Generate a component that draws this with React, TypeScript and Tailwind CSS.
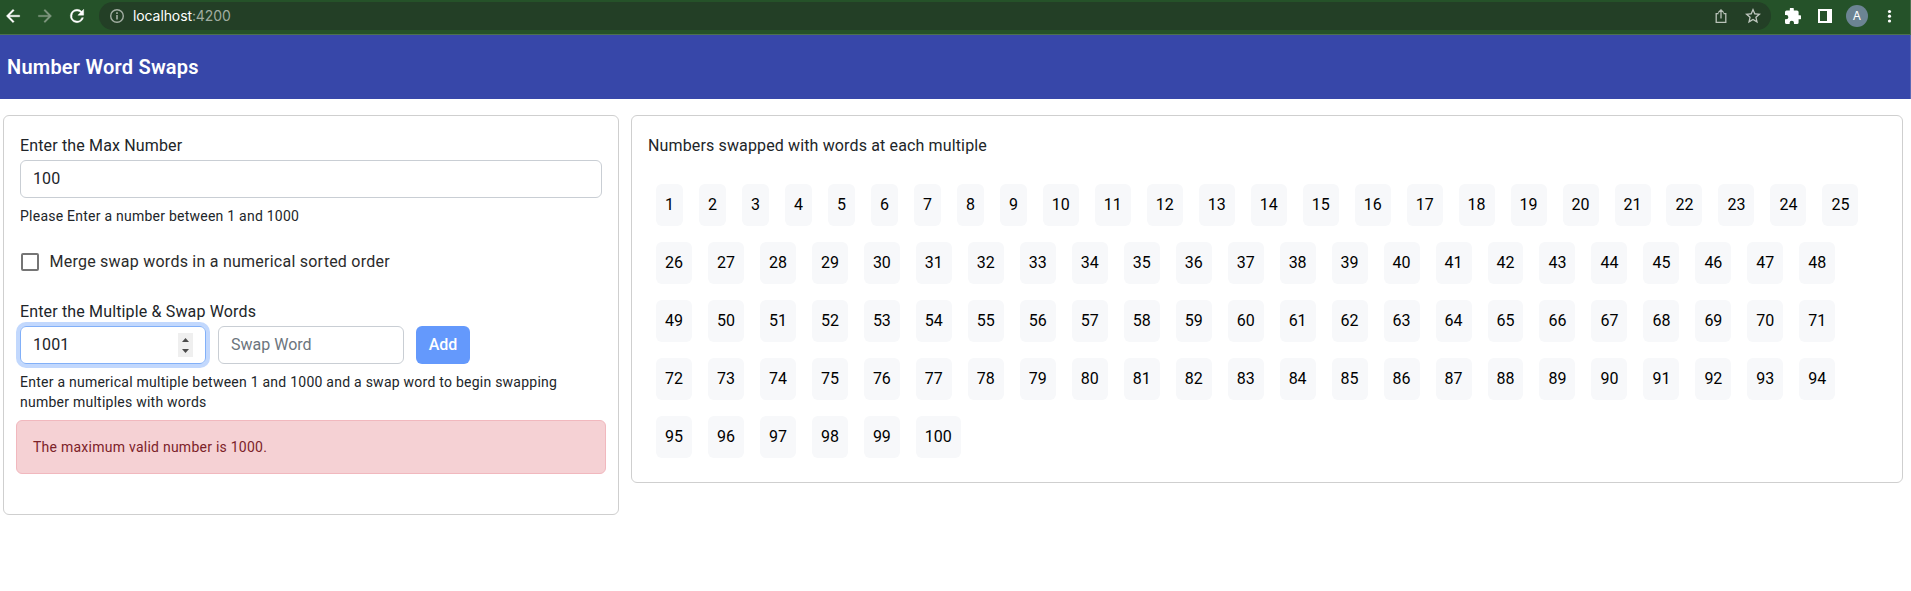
import React from "react";

const numbers = Array.from({ length: 100 }, (_, i) => i + 1);

function BrowserBar() {
  return (
    <div className="flex h-[35px] items-start border-r border-b border-[#4d714f] bg-[#255229] pt-0.5 font-[Inter,sans-serif] text-white">
      <svg className="mt-[4px] ml-[3px] size-5" viewBox="0 0 24 24" fill="currentColor" stroke="currentColor" strokeWidth="0.4">
        <path d="M20 11H7.83l5.59-5.59L12 4l-8 8 8 8 1.41-1.41L7.83 13H20v-2z" />
      </svg>
      <svg className="mt-[4px] ml-3 size-5 text-[#7f977f]" viewBox="0 0 24 24" fill="currentColor" stroke="currentColor" strokeWidth="0.3">
        <path d="M12 4l-1.41 1.41L16.17 11H4v2h12.17l-5.58 5.59L12 20l8-8z" />
      </svg>
      <svg className="mt-[4px] ml-3 size-5" viewBox="0 0 24 24" fill="currentColor" stroke="currentColor" strokeWidth="0.5">
        <path d="M17.65 6.35A7.96 7.96 0 0 0 12 4a8 8 0 1 0 7.73 10h-2.08A6 6 0 1 1 12 6c1.66 0 3.14.69 4.22 1.78L13 11h7V4l-2.35 2.35z" />
      </svg>
      <div className="ml-3 flex h-7 w-[1672px] items-center rounded-full bg-[#233f26] pl-[10px] pr-[10px]">
        <svg className="size-4 text-[#a3aea3]" viewBox="0 0 16 16" fill="none" stroke="currentColor" strokeWidth="1.4">
          <circle cx="8" cy="8" r="6.3" />
          <path d="M8 7v4.4M8 4.3v1.6" strokeWidth="1.6" />
        </svg>
        <span className="ml-2 text-[14px] leading-7 tracking-[-0.1px]">
          localhost<span className="text-[#a0ada0]">:4200</span>
        </span>
        <svg className="ml-auto size-4 text-[#b9c2b9]" viewBox="0 0 16 16" fill="none" stroke="currentColor" strokeWidth="1.3">
          <path d="M5.5 5.6H3.2v8.7h9.6V5.6h-2.3M8 10.5V2M5.2 4.6 8 1.8l2.8 2.8" />
        </svg>
        <svg className="ml-4 size-4 text-[#c0c8c0]" viewBox="2 2 20 20" fill="currentColor">
          <path d="M22 9.24l-7.19-.62L12 2 9.19 8.63 2 9.24l5.46 4.73L5.82 21 12 17.27 18.18 21l-1.63-7.03L22 9.24zM12 15.4l-3.76 2.27 1-4.28-3.32-2.88 4.38-.38L12 6.1l1.71 4.04 4.38.38-3.32 2.88 1 4.28L12 15.4z" />
        </svg>
      </div>
      <svg className="mt-[6px] ml-[14px] size-4" viewBox="2 2 20 20" fill="currentColor">
        <path d="M20.5 11H19V7a2 2 0 0 0-2-2h-4V3.5a2.5 2.5 0 0 0-5 0V5H4a2 2 0 0 0-2 2v3.8h1.5a2.7 2.7 0 0 1 0 5.4H2V20a2 2 0 0 0 2 2h3.8v-1.5a2.7 2.7 0 0 1 5.4 0V22H17a2 2 0 0 0 2-2v-4h1.5a2.5 2.5 0 0 0 0-5z" />
      </svg>
      <svg className="mt-[7px] ml-[17px] size-[14px]" viewBox="0 0 14 14" fill="currentColor" fillRule="evenodd">
        <path d="M0 0h14v14H0zM2 2v10h7V2z" />
      </svg>
      <span className="mt-[3px] ml-[14px] flex size-[22px] items-center justify-center rounded-full bg-[#6c8493] text-[12px]">A</span>
      <svg className="mt-[6px] ml-[13px] size-4" viewBox="0 0 16 16" fill="currentColor">
        <circle cx="8.5" cy="3.5" r="1.6" />
        <circle cx="8.5" cy="8.2" r="1.6" />
        <circle cx="8.5" cy="13" r="1.6" />
      </svg>
    </div>
  );
}

const field =
  "h-[38px] rounded-md border bg-white px-3 pb-0.5 text-base text-[#212529] outline-none placeholder:text-[#6c757d] placeholder:opacity-100";

function SwapForm() {
  return (
    <section className="h-[400px] w-[616px] rounded-md border border-[#cfcfcf] px-4 pt-[18px]">
      <label className="block h-[26px] text-base leading-6 tracking-[0.15px]">Enter the Max Number</label>
      <input className={`${field} block w-[582px] border-[#c9ced4] tracking-[0.1px]`} defaultValue="100" />
      <p className="mt-2 text-[14px] leading-5 tracking-[0.24px]">Please Enter a number between 1 and 1000</p>
      <label className="mt-[26px] flex h-5 items-center pl-px text-base tracking-[0.24px] text-[#2b2b2b]">
        <span className="mr-[10.5px] size-[18px] rounded-[2px] border-2 border-[#757575]" />
        Merge swap words in a numerical sorted order
      </label>
      <label className="mt-7 block h-[26px] text-base leading-6 tracking-[0.15px]">Enter the Multiple &amp; Swap Words</label>
      <div className="flex gap-3">
        <div className="flex h-[38px] w-[186px] items-center rounded-md border border-[#82b0f8] pr-3 shadow-[0_0_0_4px_#c2d8fd]">
          <input className="h-9 w-0 grow rounded-md pb-0.5 pl-3 text-base tracking-[0.1px] text-[#212529] outline-none" defaultValue="1001" />
          <svg className="h-6 w-[15px] bg-[#efefef]" viewBox="0 0 15 24" fill="#4b4b4b">
            <path d="M4 9h7L7.5 5zM4 16h7l-3.5 4z" />
          </svg>
        </div>
        <input className={`${field} w-[186px] border-[#c9ced4]`} placeholder="Swap Word" />
        <button className="h-[38px] w-[54px] rounded-md bg-[#6499fc] text-base font-medium text-white">Add</button>
      </div>
      <p className="mt-2 text-[14px] leading-5 tracking-[0.245px]">
        Enter a numerical multiple between 1 and 1000 and a swap word to begin swapping
        <br />
        number multiples with words
      </p>
      <div className="-mx-1 mt-2 flex h-[54px] items-center rounded-md border border-[#f1b8be] bg-[#f5d1d4] px-4 text-[14px] tracking-[0.25px] text-[#7c2229]">
        The maximum valid number is 1000.
      </div>
    </section>
  );
}

export default function App() {
  return (
    <div className="h-[591px] overflow-hidden bg-white font-[Roboto,sans-serif] text-[#212529]">
      <BrowserBar />
      <header className="flex h-16 items-center border-r border-[#5a67b5] bg-[#3747a9] px-[7px]">
        <h1 className="text-[20px] font-semibold tracking-[0.23px] text-white">Number Word Swaps</h1>
      </header>
      <main className="flex items-start gap-3 px-[3px] pt-4">
        <SwapForm />
        <section className="h-[368px] w-[1272px] rounded-md border border-[#cfcfcf] px-4 pt-[18px]">
          <h2 className="text-base leading-6 tracking-[0.14px]">Numbers swapped with words at each multiple</h2>
          <div className="mt-[26px] flex flex-wrap gap-x-[15.985px] gap-y-4 pl-2">
            {numbers.map((n) => (
              <span key={n} className="rounded-md bg-[#f7f8fa] px-[9px] py-[9px] text-base leading-6 text-black">
                {n}
              </span>
            ))}
          </div>
        </section>
      </main>
    </div>
  );
}
